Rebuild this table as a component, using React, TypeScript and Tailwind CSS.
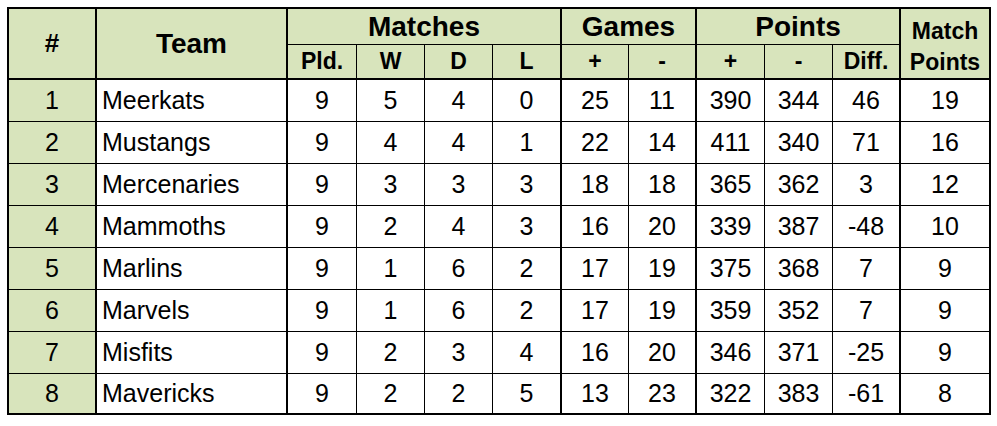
const COLS = "grid grid-cols-[88px_191px_69px_68px_68px_69px_67px_68px_68px_68px_68px_88px]"

// right border per column: thick where a group ends
const EDGE = [
  "border-r-2",
  "border-r-2",
  "border-r",
  "border-r",
  "border-r",
  "border-r-2",
  "border-r",
  "border-r-2",
  "border-r",
  "border-r",
  "border-r-2",
  "",
]

const ROWS: [number, string, number, number, number, number, number, number, number, number, number, number][] = [
  [1, "Meerkats", 9, 5, 4, 0, 25, 11, 390, 344, 46, 19],
  [2, "Mustangs", 9, 4, 4, 1, 22, 14, 411, 340, 71, 16],
  [3, "Mercenaries", 9, 3, 3, 3, 18, 18, 365, 362, 3, 12],
  [4, "Mammoths", 9, 2, 4, 3, 16, 20, 339, 387, -48, 10],
  [5, "Marlins", 9, 1, 6, 2, 17, 19, 375, 368, 7, 9],
  [6, "Marvels", 9, 1, 6, 2, 17, 19, 359, 352, 7, 9],
  [7, "Misfits", 9, 2, 3, 4, 16, 20, 346, 371, -25, 9],
  [8, "Mavericks", 9, 2, 2, 5, 13, 23, 322, 383, -61, 8],
]

const HEAD = "bg-[#d8e4bc] border-black flex items-center justify-center font-bold text-black"
const SUB = `${HEAD} text-[23px] border-b-2`

export default function App() {
  return (
    <div className="min-h-[426px] w-[997px] bg-white pl-[7px] pt-[7px] font-['Liberation_Sans',Arial,sans-serif]">
      <div className="w-[984px] border-2 border-black">
        {/* header */}
        <div className={`${COLS} grid-rows-[36px_35px]`}>
          <div className={`${HEAD} row-span-2 border-r-2 border-b-2 text-[26px]`}>#</div>
          <div className={`${HEAD} row-span-2 border-r-2 border-b-2 text-[28px]`}>Team</div>
          <div className={`${HEAD} col-span-4 border-r-2 border-b text-[28px]`}>Matches</div>
          <div className={`${HEAD} col-span-2 border-r-2 border-b text-[28px]`}>Games</div>
          <div className={`${HEAD} col-span-3 border-r-2 border-b text-[28px]`}>Points</div>
          <div className="row-span-2 flex flex-col items-center border-b-2 border-black bg-[#d8e4bc] pt-[7px] text-[23px] font-bold leading-[31px] text-black">
            <span>Match</span>
            <span>Points</span>
          </div>
          <div className={`${SUB} border-r`}>Pld.</div>
          <div className={`${SUB} border-r`}>W</div>
          <div className={`${SUB} border-r`}>D</div>
          <div className={`${SUB} border-r-2`}>L</div>
          <div className={`${SUB} border-r`}>+</div>
          <div className={`${SUB} border-r-2`}>-</div>
          <div className={`${SUB} border-r`}>+</div>
          <div className={`${SUB} border-r`}>-</div>
          <div className={`${SUB} border-r-2`}>Diff.</div>
        </div>

        {/* body */}
        {ROWS.map((row, i) => {
          const last = i === ROWS.length - 1
          return (
            <div
              key={row[0]}
              className={`${COLS} ${last ? "h-[39px]" : "h-[42px] border-b border-black"} text-[25px] text-black`}
            >
              {row.map((v, c) => (
                <div
                  key={c}
                  className={`${EDGE[c]} flex items-center border-black ${
                    c === 1 ? "justify-start pl-[5px]" : "justify-center"
                  } ${c === 0 ? "bg-[#d8e4bc]" : "bg-white"}`}
                >
                  {v}
                </div>
              ))}
            </div>
          )
        })}
      </div>
    </div>
  )
}
